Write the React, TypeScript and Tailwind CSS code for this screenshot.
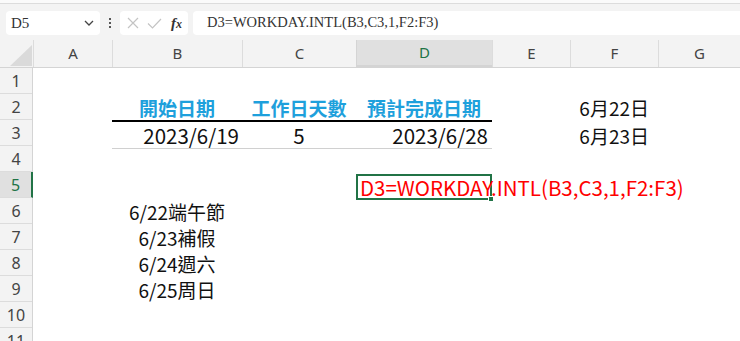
const cols = ["A", "B", "C", "D", "E", "F", "G"];

const cellFont = { fontFamily: '"Noto Sans CJK TC", "Noto Sans", sans-serif' };

const Cell = ({ className = "", children }: { className?: string; children?: React.ReactNode }) => (
  <div className={`h-[26px] flex items-center whitespace-nowrap leading-none ${className}`}>{children}</div>
);

const App = () => {
  return (
    <div className="w-[740px] h-[341px] overflow-hidden bg-[#f3f3f3] font-['Noto_Sans_CJK_TC',sans-serif]">
      {/* ribbon edge */}
      <div className="h-[4px] bg-[#fafafa] border-b border-[#dcdcdc]" />

      {/* formula bar */}
      <div className="flex items-center h-[36px] pt-[2px] pl-[6px] gap-[5px]">
        <div className="w-[94px] h-[24px] bg-white rounded-[4px] flex items-center justify-between pl-[5px] pr-[6px]">
          <span className="text-[15px] text-[#333] font-['Liberation_Serif',serif]">D5</span>
          <svg width="10" height="6" viewBox="0 0 10 6" fill="none" stroke="#444" strokeWidth="1.3">
            <path d="M1 1l4 4 4-4" />
          </svg>
        </div>
        <div className="w-[10px] flex flex-col items-center gap-[2px]">
          <span className="w-[2px] h-[2px] bg-[#555]" />
          <span className="w-[2px] h-[2px] bg-[#555]" />
          <span className="w-[2px] h-[2px] bg-[#555]" />
        </div>
        <div className="w-[68px] h-[24px] bg-white rounded-[4px] flex items-center pl-[7px] gap-[8px]">
          <svg width="12" height="12" viewBox="0 0 12 12" stroke="#c4c4c4" strokeWidth="1.2">
            <path d="M1 1l10 10M11 1L1 11" />
          </svg>
          <svg width="15" height="11" viewBox="0 0 15 11" fill="none" stroke="#c4c4c4" strokeWidth="1.2">
            <path d="M1 5.5l4.5 4.5L14 1" />
          </svg>
          <span className="text-[15px] italic font-bold text-[#333] font-['Liberation_Serif',serif] leading-none ml-[1px]">
            f<span className="text-[12px]">x</span>
          </span>
        </div>
        <div className="flex-1 h-[24px] bg-white rounded-l-[4px] flex items-center pl-[14px]">
          <span className="text-[14.5px] text-[#333] font-['Liberation_Serif',serif]">D3=WORKDAY.INTL(B3,C3,1,F2:F3)</span>
        </div>
      </div>

      {/* column headers */}
      <div className="grid grid-cols-[33px_79px_130px_114px_136px_78px_88px_82px] h-[28px] border-b border-[#d4d4d4] text-[15px] text-[#444] font-['Noto_Sans',sans-serif]">
        <div className="relative">
          <svg className="absolute left-[10px] top-[5px]" width="22" height="21" viewBox="0 0 22 21">
            <path d="M22 0V21H0Z" fill="#dadada" />
          </svg>
        </div>
        {cols.map((c) =>
          c === "D" ? (
            <div key={c} className="flex items-center justify-center bg-[#e0e0e0] text-[#217346] border-b-2 border-[#217346] border-l border-[#d4d4d4]">
              {c}
            </div>
          ) : (
            <div key={c} className="flex items-center justify-center border-l border-[#dcdcdc]">
              {c}
            </div>
          )
        )}
      </div>

      {/* sheet */}
      <div className="flex">
        <div className="w-[33px] border-r border-[#d4d4d4] text-[16px] text-[#444] font-['Noto_Sans',sans-serif]">
          {Array.from({ length: 11 }, (_, i) => i + 1).map((n) =>
            n === 5 ? (
              <div key={n} className="h-[26px] flex items-center justify-center bg-[#e0e0e0] text-[#217346] border-r-2 border-[#217346] border-b border-b-[#dcdcdc] -mr-[1px]">
                {n}
              </div>
            ) : (
              <div key={n} className="h-[26px] flex items-center justify-center border-b border-[#dcdcdc]">
                {n}
              </div>
            )
          )}
        </div>

        <div className="flex-1 bg-white text-[19px] text-[#111]" style={cellFont}>
          <Cell />
          <div className="flex">
            <div className="w-[79px]" />
            <div className="flex border-b-2 border-black">
              <Cell className="w-[130px] justify-center font-bold text-[#1ea0dc]">開始日期</Cell>
              <Cell className="w-[114px] justify-center font-bold text-[#1ea0dc]">工作日天數</Cell>
              <Cell className="w-[136px] justify-center font-bold text-[#1ea0dc]">預計完成日期</Cell>
            </div>
            <Cell className="w-[78px]" />
            <Cell className="w-[88px] justify-end pr-[9px]">6月22日</Cell>
          </div>
          <div className="flex">
            <div className="w-[79px]" />
            <div className="flex border-b border-[#d0d0d0] -mt-[2px] pt-[2px] text-[20.5px]">
              <Cell className="w-[130px] justify-end pr-[3px]">2023/6/19</Cell>
              <Cell className="w-[114px] justify-center">5</Cell>
              <Cell className="w-[136px] justify-end pr-[4px]">2023/6/28</Cell>
            </div>
            <Cell className="w-[78px]" />
            <Cell className="w-[88px] justify-end pr-[9px]">6月23日</Cell>
          </div>
          <Cell />
          <div className="flex">
            <div className="w-[323px]" />
            <div className="relative w-[136px] h-[26px] border-2 border-[#217346] -mt-[1px]">
              <span className="absolute left-[2px] top-0 leading-[22px] whitespace-nowrap text-[20.5px] text-[#ff0000]">
                D3=WORKDAY.INTL(B3,C3,1,F2:F3)
              </span>
              <span className="absolute -right-[4px] -bottom-[4px] w-[6px] h-[6px] bg-[#217346] border border-white" />
            </div>
          </div>
          <div className="flex -mt-[2px]">
            <div className="w-[79px]" />
            <div className="w-[130px]">
              <Cell className="justify-center">6/22端午節</Cell>
              <Cell className="justify-center">6/23補假</Cell>
              <Cell className="justify-center">6/24週六</Cell>
              <Cell className="justify-center">6/25周日</Cell>
            </div>
          </div>
          <Cell />
          <Cell />
        </div>
      </div>
    </div>
  );
};

export default App;
